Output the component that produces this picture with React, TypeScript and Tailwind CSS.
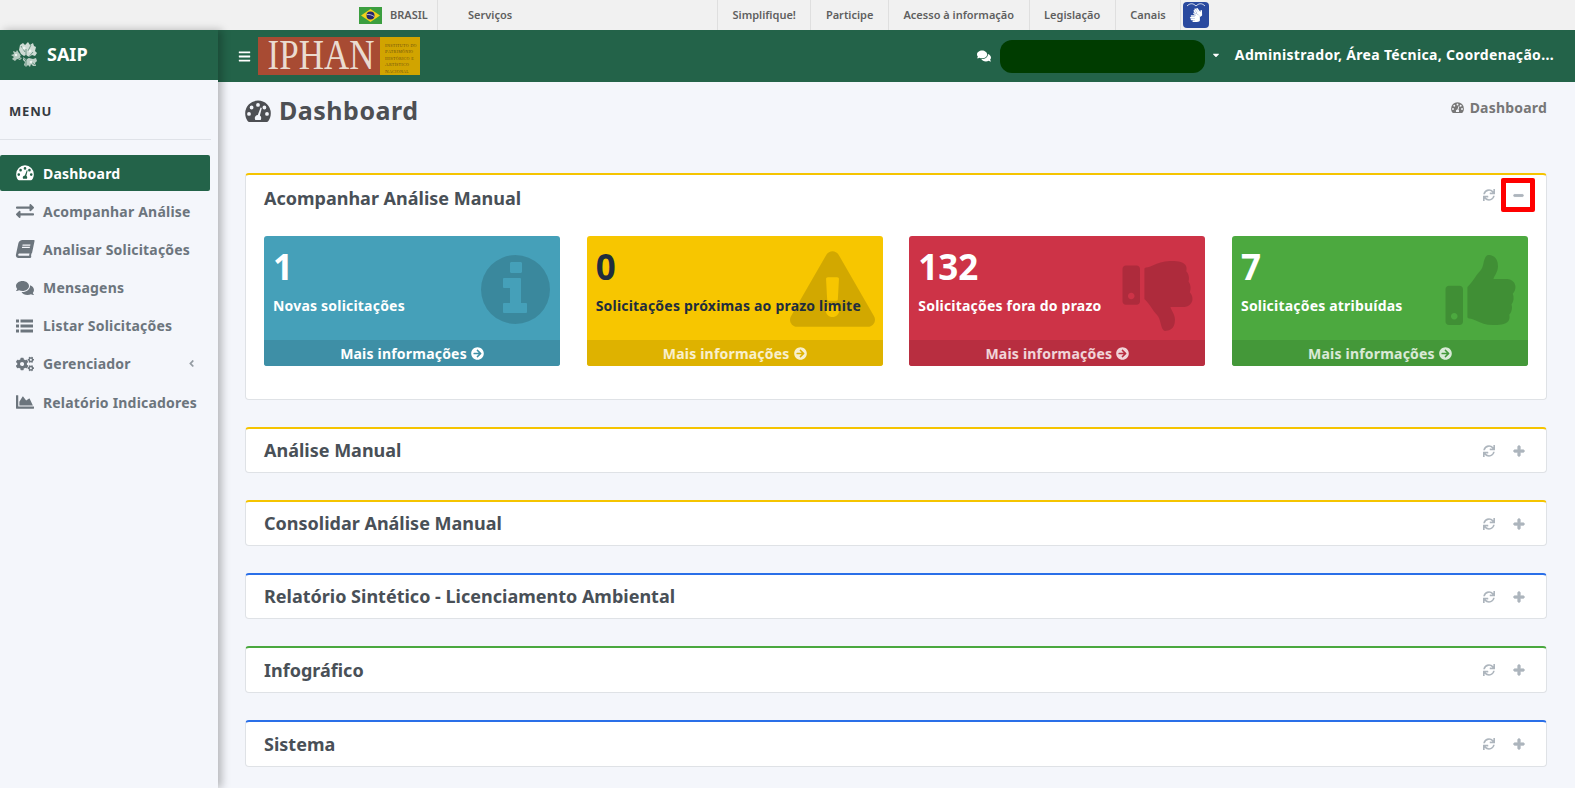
import React from "react";
import {
  FaAngleLeft,
  FaArrowCircleRight,
  FaBars,
  FaBook,
  FaCaretDown,
  FaChartArea,
  FaCogs,
  FaComments,
  FaExchangeAlt,
  FaExclamationTriangle,
  FaMinus,
  FaPlus,
  FaSignLanguage,
  FaSync,
  FaThumbsDown,
  FaThumbsUp,
} from "react-icons/fa";

const font = { fontFamily: '"Noto Sans", sans-serif' };

const Flag = () => (
  <svg width="23" height="17" viewBox="0 0 23 17" className="shrink-0">
    <rect width="23" height="17" fill="#3b9e3f" />
    <polygon points="11.5,2 21,8.5 11.5,15 2,8.5" fill="#f3d21c" />
    <circle cx="11.5" cy="8.5" r="4" fill="#27276f" />
    <path d="M7.8 7.6c2.6-.4 5.2.3 7.4 2" stroke="#fff" strokeWidth="0.7" fill="none" />
  </svg>
);

const Emblem = () => (
  <svg width="30" height="29" viewBox="0 0 30 29" className="shrink-0">
    <g fill="#cfdcd5">
      <path d="M9 4l3-2 2 2 3-3 2 3 3-2 1 3 2 1-1 4 2 2-2 3-3-1-3 2-3-2-2 1-3-2-2-4z" />
      <path d="M2 10l3 1 1-2 2 3 2 2-1 2 2 1-2 2-3-1-2 2-3-2 2-2-3-2 3-1z" opacity="0.85" />
      <path d="M12 16l3 2 3-1 4 1 3-1 1 3-2 2 1 3-3 0-2-2-1 3-2-2-2 2-2-2 1-3-2-2z" opacity="0.9" />
    </g>
    <g stroke="#236349" strokeWidth="0.8" fill="none" opacity="0.7">
      <path d="M15 26V8M15 20l-6-7M15 19l7-8M10 5l4 6M20 4l-3 6M6 19l5-3M24 24l-5-4" />
    </g>
    <g fill="#eef4f0">
      <circle cx="13" cy="7" r="1.6" />
      <circle cx="19" cy="10" r="1.4" />
      <circle cx="5" cy="14" r="1.2" />
      <circle cx="20" cy="21" r="1.3" />
    </g>
  </svg>
);

const Gauge = ({ size, className }: { size: number; className?: string }) => (
  <svg width={size} height={(size * 22) / 26} viewBox="0 0 26 22" className={className}>
    <path
      fill="currentColor"
      fillRule="evenodd"
      d="M13 0.5A12.8 12.8 0 0 0 0.2 13.3c0 2.9.9 5.6 2.4 7.7.4.6 1 1 1.7 1h17.4c.7 0 1.3-.4 1.7-1 1.5-2.1 2.4-4.8 2.4-7.7A12.8 12.8 0 0 0 13 .5zM13 3a1.9 1.9 0 1 1 0 3.8A1.9 1.9 0 0 1 13 3zM6.6 5.6a1.9 1.9 0 1 1 0 3.8 1.9 1.9 0 0 1 0-3.8zM19.4 5.6a1.9 1.9 0 1 1 0 3.8 1.9 1.9 0 0 1 0-3.8zM4 12a1.9 1.9 0 1 1 0 3.8A1.9 1.9 0 0 1 4 12zM22 12a1.9 1.9 0 1 1 0 3.8 1.9 1.9 0 0 1 0-3.8zM15.6 7.5l1.2.4-1.9 7.6c.8.6 1.3 1.5 1.3 2.6 0 .7-.2 1.3-.5 1.8h-5.4c-.3-.5-.5-1.100-.5-1.800 0-1.700 1.300-3 3-3.100z"
    />
  </svg>
);

const ListIcon = () => (
  <svg width="17" height="14" viewBox="0 0 17 14">
    <g fill="currentColor">
      <rect x="0" y="0.5" width="3" height="3" />
      <rect x="0" y="5.500" width="3" height="3" />
      <rect x="0" y="10.500" width="3" height="3" />
      <rect x="4.500" y="0.500" width="12.500" height="3" />
      <rect x="4.500" y="5.500" width="12.500" height="3" />
      <rect x="4.500" y="10.500" width="12.500" height="3" />
    </g>
  </svg>
);

const InfoBig = () => (
  <svg viewBox="0 0 69 69" className="absolute left-[217px] top-[19px] w-[69px] h-[69px] text-black/15">
    <path
      fill="currentColor"
      fillRule="evenodd"
      d="M34.5 0a34.500 34.500 0 1 0 0 69 34.500 34.500 0 0 0 0-69zM30 7h10a2 2 0 0 1 1 1v9a2 2 0 0 1-1 1H30a2 2 0 0 1-1-1V8a2 2 0 0 1 1-1zM23 23h16a1 1 0 0 1 1 1v24h5a1 1 0 0 1 1 1v8a1 1 0 0 1-1 1H23a1 1 0 0 1-1-1v-8a1 1 0 0 1 1-1h6V33h-6a1 1 0 0 1-1-1v-8a1 1 0 0 1 1-1z"
    />
  </svg>
);

const TopLink = ({ label }: { label: string }) => (
  <span className="flex items-center h-full px-[14.5px] border-r border-[#dfdfdf] text-[11px] font-semibold text-[#5f5f5f]">
    {label}
  </span>
);

const TopBar = () => (
  <div className="flex items-center h-[30px] bg-[#f1f1f1] pl-[359px] shrink-0 text-[#5f5f5f]">
    <Flag />
    <span className="ml-2 w-[48px] h-full flex items-center border-r border-[#dfdfdf] text-[11px] font-semibold">
      BRASIL
    </span>
    <span className="ml-[30px] w-[249px] text-[11px] font-semibold">Serviços</span>
    <span className="h-full border-l border-[#dfdfdf]" />
    <TopLink label="Simplifique!" />
    <TopLink label="Participe" />
    <TopLink label="Acesso à informação" />
    <TopLink label="Legislação" />
    <TopLink label="Canais" />
    <span className="ml-[2px] w-[26px] h-[26px] rounded-[4px] bg-[#2a4a9f] flex flex-col items-center text-white">
      <svg width="22" height="6" viewBox="0 0 22 6" fill="none" stroke="#fff" strokeWidth="0.8">
        <path d="M2 4c3-3 6-3 9 0 3-3 6-3 9 0" />
      </svg>
      <FaSignLanguage size={14} />
    </span>
  </div>
);

const menu = [
  { label: "Dashboard", icon: <Gauge size={18} />, active: true },
  { label: "Acompanhar Análise", icon: <FaExchangeAlt /> },
  { label: "Analisar Solicitações", icon: <FaBook className="-skew-x-12" /> },
  { label: "Mensagens", icon: <FaComments /> },
  { label: "Listar Solicitações", icon: <ListIcon /> },
  { label: "Gerenciador", icon: <FaCogs />, arrow: true },
  { label: "Relatório Indicadores", icon: <FaChartArea /> },
];

const Sidebar = () => (
  <aside className="w-[218px] shrink-0 bg-[#f4f6fb] shadow-[4px_0_8px_rgba(0,0,0,0.25)] z-10">
    <div className="flex items-center gap-[6px] h-[50px] pl-[11px] bg-[#236349] text-white">
      <Emblem />
      <span className="text-[18px] font-bold -mt-[1px]">SAIP</span>
    </div>
    <div className="h-[60px] w-[211px] pl-[9px] pt-[22px] border-b border-[#dfe2e8] text-[13px] font-bold tracking-[0.8px] text-[#343a40]">
      MENU
    </div>
    <ul className="mt-[15px] w-[210px]">
      {menu.map((m) => (
        <li
          key={m.label}
          className={`flex items-center h-[36px] mb-[2.2px] pl-[16px] pr-[13px] rounded-[2px] text-[14px] font-bold tracking-[0.2px] ${
            m.active ? "bg-[#236349] text-white" : "text-[#6c757d]"
          }`}
        >
          <span className="w-[27px] flex text-[18px]">{m.icon}</span>
          <span className="flex-1 whitespace-nowrap">{m.label}</span>
          {m.arrow && <FaAngleLeft size={11} className="opacity-70" />}
        </li>
      ))}
    </ul>
  </aside>
);

const Header = () => (
  <header className="flex items-center h-[52px] pl-[20px] pr-[21px] bg-[#236349] text-white shrink-0">
    <FaBars size={13} />
    <div className="ml-[7px] flex h-[38px] w-[162px] -mt-[1px]">
      <div className="w-[122px] bg-[#a84b33] flex items-center justify-center pl-[4px] text-[#eadbd0] text-[35px] leading-none font-['Liberation_Serif']">
        <span className="scale-y-[1.2]">IPHAN</span>
      </div>
      <div className="flex-1 bg-[#d1a400] text-[#6e4f10] text-[5px] leading-[6.5px] tracking-[0.3px] pl-[5px] pt-[6px] whitespace-nowrap [font-variant:small-caps] font-['Liberation_Serif']">
        Instituto do
        <br />
        Patrimônio
        <br />
        Histórico e
        <br />
        Artístico
        <br />
        Nacional
      </div>
    </div>
    <FaComments size={14} className="ml-auto" />
    <span className="ml-[9px] w-[205px] h-[33px] rounded-[12px] bg-[#003c00]" />
    <FaCaretDown size={10} className="ml-[6px] -mt-[3px]" />
    <span className="ml-[14px] text-[14px] font-bold tracking-[0.33px] whitespace-nowrap -mt-[3px]">
      Administrador, Área Técnica, Coordenação...
    </span>
  </header>
);

const cards = [
  {
    n: "1",
    label: "Novas solicitações",
    bg: "bg-[#45a0b9]",
    foot: "bg-[#3e8fa6]",
    text: "text-white",
    footText: "text-white",
    icon: <InfoBig />,
  },
  {
    n: "0",
    label: "Solicitações próximas ao prazo limite",
    bg: "bg-[#f7c600]",
    foot: "bg-[#deb200]",
    text: "text-[#1f2d3d]",
    footText: "text-white/80",
    icon: <FaExclamationTriangle className="absolute left-[203px] top-[14px] w-[85px] h-[78px] text-black/15" />,
  },
  {
    n: "132",
    label: "Solicitações fora do prazo",
    bg: "bg-[#cd3347]",
    foot: "bg-[#b82e40]",
    text: "text-white",
    footText: "text-white/80",
    icon: <FaThumbsDown className="absolute left-[211px] top-[25px] w-[75px] h-[70px] text-black/15" />,
  },
  {
    n: "7",
    label: "Solicitações atribuídas",
    bg: "bg-[#4ca93f]",
    foot: "bg-[#449839]",
    text: "text-white",
    footText: "text-white/80",
    icon: <FaThumbsUp className="absolute left-[211px] top-[19px] w-[75px] h-[70px] text-black/15" />,
  },
];

const StatCard = ({ c }: { c: (typeof cards)[number] }) => (
  <div className={`relative w-[296px] h-[130px] rounded-[3px] overflow-hidden flex flex-col ${c.bg} ${c.text}`}>
    {c.icon}
    <div className="relative flex-1 pl-[9px] pt-[8px]">
      <div className="text-[35px] leading-[46px] font-bold">{c.n}</div>
      <div className="mt-[6px] text-[14px] leading-[20px] font-bold tracking-[0.2px] whitespace-nowrap">{c.label}</div>
    </div>
    <div className={`relative h-[26px] flex items-center justify-center gap-1 text-[14px] font-bold tracking-[0.2px] ${c.foot} ${c.footText}`}>
      Mais informações <FaArrowCircleRight size={13} />
    </div>
  </div>
);

const panels = [
  { title: "Análise Manual", border: "border-t-[#f5c400]", h: "h-[46px]" },
  { title: "Consolidar Análise Manual", border: "border-t-[#f5c400]", h: "h-[46px]" },
  { title: "Relatório Sintético - Licenciamento Ambiental", border: "border-t-[#2a6fe8]", h: "h-[46px]" },
  { title: "Infográfico", border: "border-t-[#4aa83f]", h: "h-[47px]" },
  { title: "Sistema", border: "border-t-[#2a6fe8]", h: "h-[47px]" },
];

const Panel = ({ title, border, h }: { title: string; border: string; h: string }) => (
  <section
    className={`flex items-center justify-between ${h} bg-white border border-[#dfe2e6] border-t-2 rounded-[4px] pl-[18px] pr-[21px] ${border}`}
  >
    <h3 className="text-[18px] font-bold text-[#495057]">{title}</h3>
    <div className="flex items-center gap-[18px] text-[#adb5bd]">
      <FaSync size={12} />
      <FaPlus size={12} stroke="currentColor" strokeWidth={40} />
    </div>
  </section>
);

const App = () => (
  <div className="h-[788px] flex flex-col overflow-hidden bg-[#f4f6fb]" style={font}>
    <TopBar />
    <div className="flex flex-1 min-h-0">
      <Sidebar />
      <div className="flex-1 min-w-0 flex flex-col">
        <Header />
        <main className="pl-[27px] pr-[28px]">
          <div className="flex items-center justify-between h-[57px]">
            <div className="flex items-center gap-2 text-[#4d4f53]">
              <Gauge size={26} />
              <h1 className="text-[25px] font-bold tracking-[0.5px]">Dashboard</h1>
            </div>
            <div className="flex items-center gap-[6px] text-[14px] font-bold tracking-[0.2px] text-[#777] -mt-[6px]">
              <Gauge size={13} /> Dashboard
            </div>
          </div>
          <section className="mt-[34px] h-[227px] bg-white border border-[#dfe2e6] border-t-2 border-t-[#f5c400] rounded-[4px] px-[18px]">
            <div className="flex items-center justify-between h-[61px] pb-[14px]">
              <h3 className="text-[18px] font-bold text-[#495057]">Acompanhar Análise Manual</h3>
              <div className="flex items-center gap-[6px] text-[#adb5bd] -mr-[7px] -mt-[7px]">
                <FaSync size={12} />
                <span className="w-[34px] h-[34px] border-[5px] border-[#ff0000] rounded-[2px] flex items-center justify-center">
                  <FaMinus size={11} stroke="currentColor" strokeWidth={40} />
                </span>
              </div>
            </div>
            <div className="flex justify-between">
              {cards.map((c) => (
                <StatCard key={c.n} c={c} />
              ))}
            </div>
          </section>
          <div className="mt-[27px] flex flex-col gap-[27px]">
            {panels.map((p) => (
              <Panel key={p.title} {...p} />
            ))}
          </div>
        </main>
      </div>
    </div>
  </div>
);

export default App;
